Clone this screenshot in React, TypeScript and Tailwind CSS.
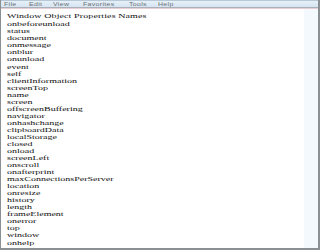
const MENU = [
  { label: "File", w: "w-[25px]" },
  { label: "Edit", w: "w-[24px]" },
  { label: "View", w: "w-[30px]" },
  { label: "Favorites", w: "w-[46px]" },
  { label: "Tools", w: "w-[29px]" },
  { label: "Help", w: "w-[24px]" },
];

const PROPS = [
  "onbeforeunload",
  "status",
  "document",
  "onmessage",
  "onblur",
  "onunload",
  "event",
  "self",
  "clientInformation",
  "screenTop",
  "name",
  "screen",
  "offscreenBuffering",
  "navigator",
  "onhashchange",
  "clipboardData",
  "localStorage",
  "closed",
  "onload",
  "screenLeft",
  "onscroll",
  "onafterprint",
  "maxConnectionsPerServer",
  "location",
  "onresize",
  "history",
  "length",
  "frameElement",
  "onerror",
  "top",
  "window",
  "onhelp",
];

export default function App() {
  return (
    <div className="flex h-[250px] w-[320px] flex-col overflow-hidden border-b-2 border-l border-r-2 border-[#8a8f94] bg-white">
      {/* menu bar */}
      <div className="flex h-[7px] shrink-0 items-center border-t border-[#b8c8d6] bg-gradient-to-b from-[#e6f0f8] to-[#d6e5f2] pl-[3px] font-['Liberation_Sans',sans-serif] text-[7px] leading-[7px] text-[#6b6f73]">
        {MENU.map((item) => (
          <span
            key={item.label}
            className={`${item.w} shrink-0 origin-center scale-y-[0.75] tracking-[0.3px]`}
          >
            {item.label}
          </span>
        ))}
      </div>
      <div className="h-px shrink-0 bg-[#a9b0b8]" />
      <div className="h-px shrink-0 bg-[#e8cfd6]" />

      <div className="flex min-h-0 flex-1">
        <div className="min-w-0 flex-1 overflow-hidden">
          <div className="origin-top scale-y-[0.64] pl-[6px] pt-[5px] font-['Liberation_Serif',serif] text-[10px] text-[#111]">
            <div className="leading-[12.5px] tracking-[0.1px]">Window Object Properties Names</div>
            {PROPS.map((p) => (
              <div key={p} className="leading-[11px]">
                {p}
              </div>
            ))}
          </div>
        </div>
        <div className="w-[14px] shrink-0 bg-[#f3f9fc]" />
      </div>
    </div>
  );
}
